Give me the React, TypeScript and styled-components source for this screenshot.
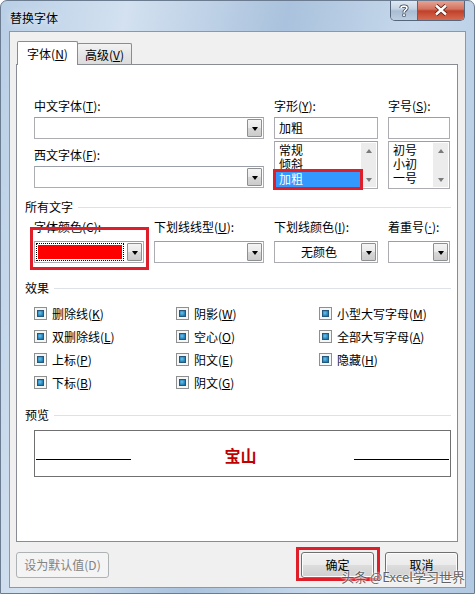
import styled, { createGlobalStyle } from "styled-components";

const GlobalStyle = createGlobalStyle`
  html, body {
    margin: 0;
    padding: 0;
    background: #ffffff;
  }
  body {
    font-family: "Noto Sans CJK SC", "Noto Sans", sans-serif;
    font-size: 12px;
    color: #000;
  }
`;

const Window = styled.div`
  position: relative;
  width: 475px;
  height: 594px;
  box-sizing: border-box;
  display: flex;
  flex-direction: column;
  border: 1px solid #6b7b90;
  border-radius: 7px 7px 0 0;
  overflow: hidden;
  background: linear-gradient(
    100deg,
    #b9cfe6 0%,
    #d3e1f0 22%,
    #aac2dd 50%,
    #c6d8eb 72%,
    #b2c9e2 100%
  );
`;

const TitleBar = styled.div`
  height: 30px;
  display: flex;
  align-items: flex-start;
  padding: 0 9px 0 9px;
`;

const Title = styled.div`
  flex: 1;
  line-height: 16px;
  padding-top: 9px;
  color: #000;
  text-shadow: 0 0 6px rgba(255, 255, 255, 0.9);
`;

const CaptionButtons = styled.div`
  display: flex;
  margin-top: -1px;
  border: 1px solid #55657a;
  border-top: none;
  border-radius: 0 0 5px 5px;
  overflow: hidden;
`;

const CaptionButton = styled.div<{ $close?: boolean }>`
  width: ${(p) => (p.$close ? 46 : 26)}px;
  height: 20px;
  display: flex;
  align-items: center;
  justify-content: center;
  background: ${(p) =>
    p.$close
      ? "linear-gradient(#e9a99b 0%, #d4735f 45%, #c1412a 55%, #d66a52 100%)"
      : "linear-gradient(#e3ebf4 0%, #c3d2e3 45%, #a9bcd2 55%, #bccde0 100%)"};
  & + & {
    border-left: 1px solid #55657a;
  }
`;

const Client = styled.div`
  flex: 1;
  margin: 0 8px 5px 8px;
  border: 1px solid #8798b0;
  background: #f0f0f0;
  padding: 9px 7px 0 6px;
  display: flex;
  flex-direction: column;
`;

const TabRow = styled.div`
  height: 23px;
  display: flex;
  align-items: flex-end;
  padding-left: 1px;
  position: relative;
  z-index: 1;
`;

const Tab = styled.div<{ $active?: boolean }>`
  box-sizing: border-box;
  height: ${(p) => (p.$active ? 24 : 21)}px;
  margin-bottom: ${(p) => (p.$active ? -1 : 0)}px;
  margin-left: ${(p) => (p.$active ? 0 : -1)}px;
  width: ${(p) => (p.$active ? 61 : 55)}px;
  border: 1px solid #898c95;
  border-bottom: none;
  border-radius: 2px 2px 0 0;
  background: ${(p) =>
    p.$active ? "#ffffff" : "linear-gradient(#f3f3f3, #e6e6e6 50%, #dcdcdc)"};
  display: flex;
  justify-content: center;
  padding-top: ${(p) => (p.$active ? 4 : 3)}px;
  line-height: 16px;
`;

const Panel = styled.div`
  height: 478px;
  box-sizing: border-box;
  border: 1px solid #898c95;
  background: #ffffff;
  padding: 33px 6px 0 8px;
  display: flex;
  flex-direction: column;
`;

const Key = styled.span`
  text-decoration: underline;
  text-underline-offset: 1px;
`;

const Dot = styled.span`
  font-family: "DejaVu Sans", sans-serif;
  text-decoration: underline;
`;

const Label = styled.div<{ $gap?: number }>`
  line-height: 16px;
  height: 16px;
  margin-top: ${(p) => p.$gap ?? 0}px;
  white-space: nowrap;
`;

const FontGrid = styled.div`
  display: grid;
  grid-template-columns: 230px 104px 62px;
  column-gap: 10px;
  margin-left: 9px;
`;

const Column = styled.div`
  display: flex;
  flex-direction: column;
`;

const Combo = styled.div<{ $gap?: number }>`
  height: 22px;
  box-sizing: border-box;
  margin-top: ${(p) => p.$gap ?? 3}px;
  border: 1px solid #abadb3;
  border-top-color: #9a9ea6;
  background: #ffffff;
  padding: 1px;
  display: flex;
  gap: 2px;
`;

const ComboText = styled.div<{ $center?: boolean }>`
  flex: 1;
  line-height: 18px;
  padding-left: 3px;
  text-align: ${(p) => (p.$center ? "center" : "left")};
`;

const DropButton = styled.div`
  width: 15px;
  box-sizing: border-box;
  border: 1px solid #8e8f8f;
  border-radius: 1px;
  background: linear-gradient(#f4f4f4 0%, #e9e9e9 50%, #d8d8d8 51%, #cbcbcb 100%);
  display: flex;
  align-items: center;
  justify-content: center;
  &::after {
    content: "";
    border-left: 3.5px solid transparent;
    border-right: 3.5px solid transparent;
    border-top: 4px solid #000;
    margin-top: 1px;
  }
`;

const Swatch = styled.div`
  flex: 1;
  border: 1px dotted #000;
  padding: 1px;
  margin-right: 1px;
  display: flex;
  &::after {
    content: "";
    flex: 1;
    background: #ff0000;
  }
`;

const ListBox = styled.div`
  height: 48px;
  box-sizing: border-box;
  margin-top: 2px;
  border: 1px solid #abadb3;
  border-top-color: #9a9ea6;
  background: #ffffff;
  padding: 1px;
  display: flex;
`;

const ListItems = styled.div`
  flex: 1;
  display: flex;
  flex-direction: column;
`;

const ListItem = styled.div<{ $selected?: boolean }>`
  position: relative;
  height: ${(p) => (p.$selected ? 16 : 14)}px;
  line-height: ${(p) => (p.$selected ? 16 : 14)}px;
  padding-left: 3px;
  background: ${(p) => (p.$selected ? "#3399ff" : "transparent")};
  color: ${(p) => (p.$selected ? "#ffffff" : "#000")};
  margin-right: 1px;
`;

const Highlight = styled.div<{ $t: number; $r: number; $b: number; $l: number }>`
  position: relative;
  &::after {
    content: "";
    position: absolute;
    top: ${(p) => -p.$t}px;
    right: ${(p) => -p.$r}px;
    bottom: ${(p) => -p.$b}px;
    left: ${(p) => -p.$l}px;
    border: 3px solid #de1f2a;
    pointer-events: none;
    z-index: 2;
  }
`;

const ScrollBar = styled.div`
  width: 15px;
  background: #ececec;
  display: flex;
  flex-direction: column;
  justify-content: space-between;
`;

const ScrollArrow = styled.div<{ $down?: boolean }>`
  height: 15px;
  display: flex;
  align-items: center;
  justify-content: center;
  &::after {
    content: "";
    border-left: 3.5px solid transparent;
    border-right: 3.5px solid transparent;
    ${(p) =>
      p.$down ? "border-top: 4px solid #7a7a7a;" : "border-bottom: 4px solid #7a7a7a;"}
  }
`;

const SectionHeader = styled.div<{ $gap: number }>`
  margin-top: ${(p) => p.$gap}px;
  display: flex;
  align-items: center;
  gap: 5px;
  line-height: 16px;
  height: 16px;
  &::after {
    content: "";
    flex: 1;
    height: 1px;
    background: #dce2e8;
  }
`;

const ColorGrid = styled.div`
  margin-top: 4px;
  margin-left: 9px;
  display: grid;
  grid-template-columns: 110px 110px 104px 62px;
  column-gap: 10px;
`;

const EffectGrid = styled.div`
  margin-top: 6px;
  margin-left: 9px;
  display: grid;
  grid-template-columns: 142px 143px 1fr;
  grid-template-rows: repeat(4, 23px);
  grid-auto-flow: column;
`;

const CheckRow = styled.div`
  display: flex;
  align-items: center;
  gap: 5px;
  line-height: 16px;
`;

const CheckBox = styled.span`
  width: 13px;
  height: 13px;
  box-sizing: border-box;
  border: 1px solid #8e8f8f;
  background: #f6f6f6;
  padding: 2px;
  display: flex;
  &::after {
    content: "";
    flex: 1;
    border: 1px solid #23587c;
    background: radial-gradient(circle at 40% 40%, #6ec3ea 0%, #2f8fc4 55%, #1b6596 100%);
  }
`;

const PreviewBox = styled.div`
  margin-top: 7px;
  margin-left: 9px;
  height: 47px;
  box-sizing: border-box;
  border: 1px solid #707070;
  display: grid;
  grid-template-columns: 95px 1fr 95px;
  align-items: end;
  padding: 0 1px 16px 1px;
`;

const PreviewLine = styled.div`
  height: 1px;
  background: #000;
`;

const PreviewText = styled.div`
  text-align: center;
  color: #c00000;
  font-weight: bold;
  font-size: 16px;
  line-height: 18px;
  margin-bottom: -4px;
  padding-right: 4px;
`;

const Footer = styled.div`
  padding-top: 10px;
  display: flex;
`;

const Button = styled.div<{ $w: number; $disabled?: boolean }>`
  width: ${(p) => p.$w}px;
  height: 26px;
  box-sizing: border-box;
  border: 1px solid ${(p) => (p.$disabled ? "#adb2b5" : "#707070")};
  border-radius: 3px;
  background: ${(p) =>
    p.$disabled
      ? "#f4f4f4"
      : "linear-gradient(#f2f2f2 0%, #ebebeb 50%, #dddddd 51%, #cfcfcf 100%)"};
  color: ${(p) => (p.$disabled ? "#838383" : "#000")};
  display: flex;
  align-items: center;
  justify-content: center;
  line-height: 16px;
  box-shadow: inset 0 0 0 1px ${(p) => (p.$disabled ? "transparent" : "#fcfcfc")};
`;

const Spacer = styled.div`
  flex: 1;
`;

const ButtonGroup = styled.div`
  display: flex;
  gap: 11px;
`;

const Watermark = styled.div`
  position: absolute;
  right: 9px;
  bottom: 8px;
  font-size: 13px;
  line-height: 16px;
  color: rgba(70, 70, 70, 0.85);
  text-shadow: 0 0 2px #ffffff, 0 0 2px #ffffff;
  white-space: nowrap;
  z-index: 3;
`;

function Dropdown({ text, center }: { text?: string; center?: boolean }) {
  return (
    <Combo>
      <ComboText $center={center}>{text}</ComboText>
      <DropButton />
    </Combo>
  );
}

function List({ items, selected }: { items: string[]; selected?: number }) {
  return (
    <ListBox>
      <ListItems>
        {items.map((it, i) =>
          i === selected ? (
            <Highlight key={it} $t={2} $r={2} $b={3} $l={3}>
              <ListItem $selected>{it}</ListItem>
            </Highlight>
          ) : (
            <ListItem key={it}>{it}</ListItem>
          )
        )}
      </ListItems>
      <ScrollBar>
        <ScrollArrow />
        <ScrollArrow $down />
      </ScrollBar>
    </ListBox>
  );
}

const effects: [string, string, string][] = [
  ["删除线(", "K", ")"],
  ["双删除线(", "L", ")"],
  ["上标(", "P", ")"],
  ["下标(", "B", ")"],
  ["阴影(", "W", ")"],
  ["空心(", "O", ")"],
  ["阳文(", "E", ")"],
  ["阴文(", "G", ")"],
  ["小型大写字母(", "M", ")"],
  ["全部大写字母(", "A", ")"],
  ["隐藏(", "H", ")"],
];

export default function App() {
  return (
    <>
      <GlobalStyle />
      <Window>
        <TitleBar>
          <Title>替换字体</Title>
          <CaptionButtons>
            <CaptionButton>
              <svg width="10" height="13" viewBox="0 0 10 13">
                <path
                  d="M2 4 C2 1.5 8 1.5 8 4 C8 6 5 6 5 8.5"
                  fill="none"
                  stroke="#3a4656"
                  strokeWidth="3.2"
                />
                <path
                  d="M2 4 C2 1.5 8 1.5 8 4 C8 6 5 6 5 8.5"
                  fill="none"
                  stroke="#ffffff"
                  strokeWidth="1.6"
                />
                <rect x="3.4" y="9.6" width="3.2" height="3" fill="#3a4656" />
                <rect x="4.1" y="10.2" width="1.8" height="1.8" fill="#fff" />
              </svg>
            </CaptionButton>
            <CaptionButton $close>
              <svg width="14" height="12" viewBox="0 0 14 12">
                <path d="M2 1.5 L12 10.5 M12 1.5 L2 10.5" stroke="#5a1d14" strokeWidth="4.2" />
                <path d="M2 1.5 L12 10.5 M12 1.5 L2 10.5" stroke="#ffffff" strokeWidth="2.4" />
              </svg>
            </CaptionButton>
          </CaptionButtons>
        </TitleBar>
        <Client>
          <TabRow>
            <Tab $active>
              字体(<Key>N</Key>)
            </Tab>
            <Tab>
              高级(<Key>V</Key>)
            </Tab>
          </TabRow>
          <Panel>
            <FontGrid>
              <Column>
                <Label>
                  中文字体(<Key>T</Key>):
                </Label>
                <Dropdown />
                <Label $gap={8}>
                  西文字体(<Key>F</Key>):
                </Label>
                <Dropdown />
              </Column>
              <Column>
                <Label>
                  字形(<Key>Y</Key>):
                </Label>
                <Combo>
                  <ComboText>加粗</ComboText>
                </Combo>
                <List items={["常规", "倾斜", "加粗"]} selected={2} />
              </Column>
              <Column>
                <Label>
                  字号(<Key>S</Key>):
                </Label>
                <Combo>
                  <ComboText />
                </Combo>
                <List items={["初号", "小初", "一号"]} />
              </Column>
            </FontGrid>

            <SectionHeader $gap={10}>所有文字</SectionHeader>
            <ColorGrid>
              <Column>
                <Label>字体颜色(C):</Label>
                <Highlight $t={8} $r={5} $b={7} $l={4}>
                  <Combo $gap={6}>
                    <Swatch />
                    <DropButton />
                  </Combo>
                </Highlight>
              </Column>
              <Column>
                <Label>
                  下划线线型(<Key>U</Key>):
                </Label>
                <Combo $gap={6}>
                  <ComboText />
                  <DropButton />
                </Combo>
              </Column>
              <Column>
                <Label>
                  下划线颜色(<Key>I</Key>):
                </Label>
                <Combo $gap={6}>
                  <ComboText $center>无颜色</ComboText>
                  <DropButton />
                </Combo>
              </Column>
              <Column>
                <Label>
                  着重号(<Dot>·</Dot>):
                </Label>
                <Combo $gap={6}>
                  <ComboText />
                  <DropButton />
                </Combo>
              </Column>
            </ColorGrid>

            <SectionHeader $gap={17}>效果</SectionHeader>
            <EffectGrid>
              {effects.map(([a, k, b]) => (
                <CheckRow key={a}>
                  <CheckBox />
                  <span>
                    {a}
                    <Key>{k}</Key>
                    {b}
                  </span>
                </CheckRow>
              ))}
            </EffectGrid>

            <SectionHeader $gap={13}>预览</SectionHeader>
            <PreviewBox>
              <PreviewLine />
              <PreviewText>宝山</PreviewText>
              <PreviewLine />
            </PreviewBox>
          </Panel>
          <Footer>
            <Button $w={93} $disabled>
              设为默认值(D)
            </Button>
            <Spacer />
            <ButtonGroup>
              <Highlight $t={5} $r={6} $b={3} $l={5}>
                <Button $w={73}>确定</Button>
              </Highlight>
              <Button $w={73}>取消</Button>
            </ButtonGroup>
          </Footer>
        </Client>
        <Watermark>头条 @Excel学习世界</Watermark>
      </Window>
    </>
  );
}
